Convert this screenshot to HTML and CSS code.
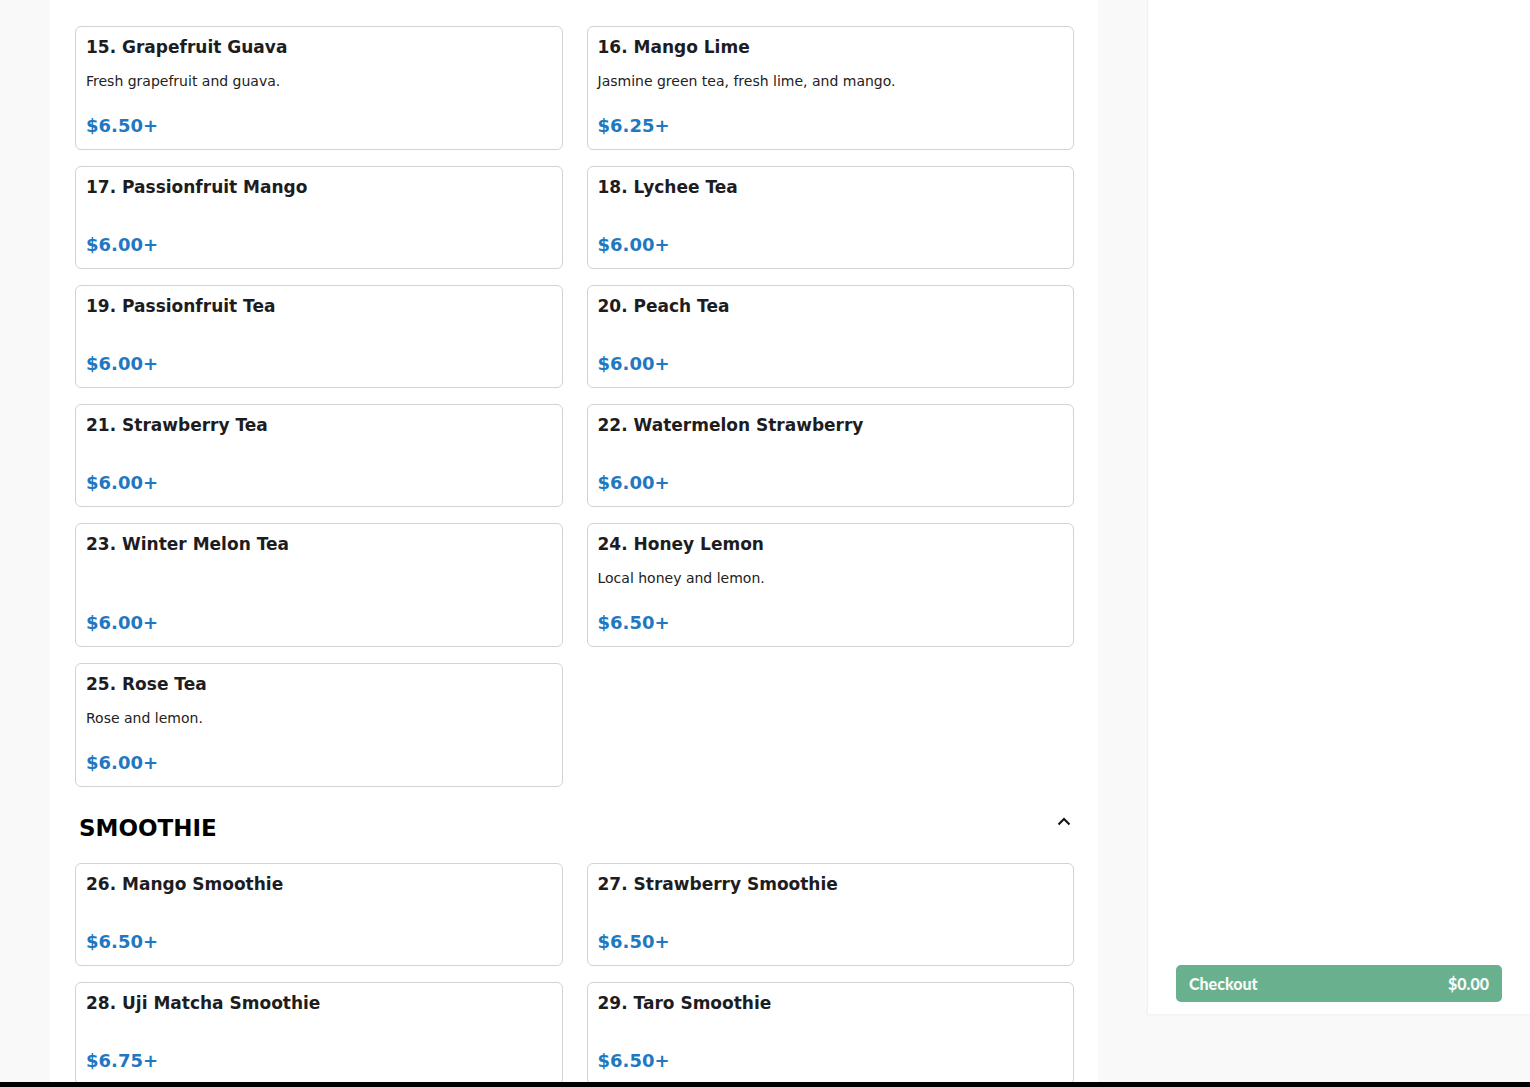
FILE: index.html
```html
<!DOCTYPE html>
<html lang="en">
<head>
<meta charset="utf-8">
<title>Menu</title>
<link rel="stylesheet" href="styles.css">
</head>
<body>
<div class="app">
  <main class="menu">
    <section class="category">
      <div class="category-head cut">
        <h2 class="category-title">FRUIT TEA</h2>
      </div>
      <div class="grid">
        <div class="card"><h3 class="card-title">15. Grapefruit Guava</h3><p class="card-desc">Fresh grapefruit and guava.</p><div class="card-price">$6.50+</div></div>
        <div class="card"><h3 class="card-title">16. Mango Lime</h3><p class="card-desc">Jasmine green tea, fresh lime, and mango.</p><div class="card-price">$6.25+</div></div>
        <div class="card"><h3 class="card-title">17. Passionfruit Mango</h3><div class="card-price">$6.00+</div></div>
        <div class="card"><h3 class="card-title">18. Lychee Tea</h3><div class="card-price">$6.00+</div></div>
        <div class="card"><h3 class="card-title">19. Passionfruit Tea</h3><div class="card-price">$6.00+</div></div>
        <div class="card"><h3 class="card-title">20. Peach Tea</h3><div class="card-price">$6.00+</div></div>
        <div class="card"><h3 class="card-title">21. Strawberry Tea</h3><div class="card-price">$6.00+</div></div>
        <div class="card"><h3 class="card-title">22. Watermelon Strawberry</h3><div class="card-price">$6.00+</div></div>
        <div class="card"><h3 class="card-title">23. Winter Melon Tea</h3><div class="card-price">$6.00+</div></div>
        <div class="card"><h3 class="card-title">24. Honey Lemon</h3><p class="card-desc">Local honey and lemon.</p><div class="card-price">$6.50+</div></div>
        <div class="card"><h3 class="card-title">25. Rose Tea</h3><p class="card-desc">Rose and lemon.</p><div class="card-price">$6.00+</div></div>
      </div>
    </section>
    <section class="category">
      <div class="category-head">
        <h2 class="category-title">SMOOTHIE</h2>
        <svg class="chevron" width="14" height="9" viewBox="0 0 14 9" aria-hidden="true"><path d="M1.5 7.5 L7 2 L12.5 7.5" fill="none" stroke="#111" stroke-width="2"/></svg>
      </div>
      <div class="grid">
        <div class="card"><h3 class="card-title">26. Mango Smoothie</h3><div class="card-price">$6.50+</div></div>
        <div class="card"><h3 class="card-title">27. Strawberry Smoothie</h3><div class="card-price">$6.50+</div></div>
        <div class="card"><h3 class="card-title">28. Uji Matcha Smoothie</h3><div class="card-price">$6.75+</div></div>
        <div class="card"><h3 class="card-title">29. Taro Smoothie</h3><div class="card-price">$6.50+</div></div>
      </div>
    </section>
  </main>
  <aside class="cart">
    <button class="checkout"><span>Checkout</span><span>$0.00</span></button>
  </aside>
</div>
<div class="bottom-bar"></div>
</body>
</html>
```
FILE: styles.css
```css
* { box-sizing: border-box; }
html, body { margin: 0; padding: 0; }
body {
  background: #000;
  font-family: "DejaVu Sans", Verdana, sans-serif;
  color: #212529;
  height: 100vh;
  display: flex;
  flex-direction: column;
  overflow: hidden;
}
.app {
  height: 1082px;
  flex: none;
  background: #f9f9f9;
  display: flex;
  align-items: flex-start;
  padding-left: 50px;
  overflow: hidden;
}
.bottom-bar { flex: 1; background: #000; }

.menu {
  width: 1048px;
  flex: none;
  background: #fff;
  padding: 0 24px 40px 25px;
  min-height: 1082px;
}
.category-head {
  display: flex;
  justify-content: space-between;
  align-items: flex-start;
  padding: 0 4px;
  margin: 26px 0 20px;
}
.category-head.cut { margin-top: -24px; margin-bottom: 20px; }
.category-title {
  margin: 0;
  font-size: 23px;
  line-height: 30px;
  font-weight: 700;
  color: #000;
}
.chevron { margin-top: 4px; margin-right: -1px; }

.grid {
  display: grid;
  grid-template-columns: 1fr 1fr;
  column-gap: 24px;
  row-gap: 16px;
}
.card {
  border: 1px solid #d3d3d3;
  border-radius: 6px;
  padding: 10px 10px 12px;
  min-height: 103px;
  display: flex;
  flex-direction: column;
  background: #fff;
}
.card-title {
  margin: 0;
  font-size: 17px;
  line-height: 20px;
  font-weight: 700;
  color: #1d1d1f;
}
.card-desc {
  margin: 14px 0 0;
  font-size: 14px;
  line-height: 20px;
  color: #222;
}
.card-price {
  margin-top: auto;
  padding-top: 24px;
  font-size: 18px;
  line-height: 22px;
  font-weight: 700;
  color: #1f78c1;
}

.cart {
  margin-left: 49px;
  width: 383px;
  flex: none;
  height: 1014px;
  background: #fff;
  border-left: 1px solid #f0f0f0;
  box-shadow: 0 1px 2px rgba(0,0,0,0.04);
  display: flex;
  flex-direction: column;
  justify-content: flex-end;
  padding: 0 28px 12px 28px;
}
.checkout {
  height: 37px;
  border: 0;
  border-radius: 5px;
  background: #69b08f;
  color: #f7faf8;
  font-family: Lato, "Open Sans", sans-serif;
  font-weight: 900;
  font-size: 16px;
  display: flex;
  justify-content: space-between;
  align-items: center;
  padding: 0 13px;
}
```
